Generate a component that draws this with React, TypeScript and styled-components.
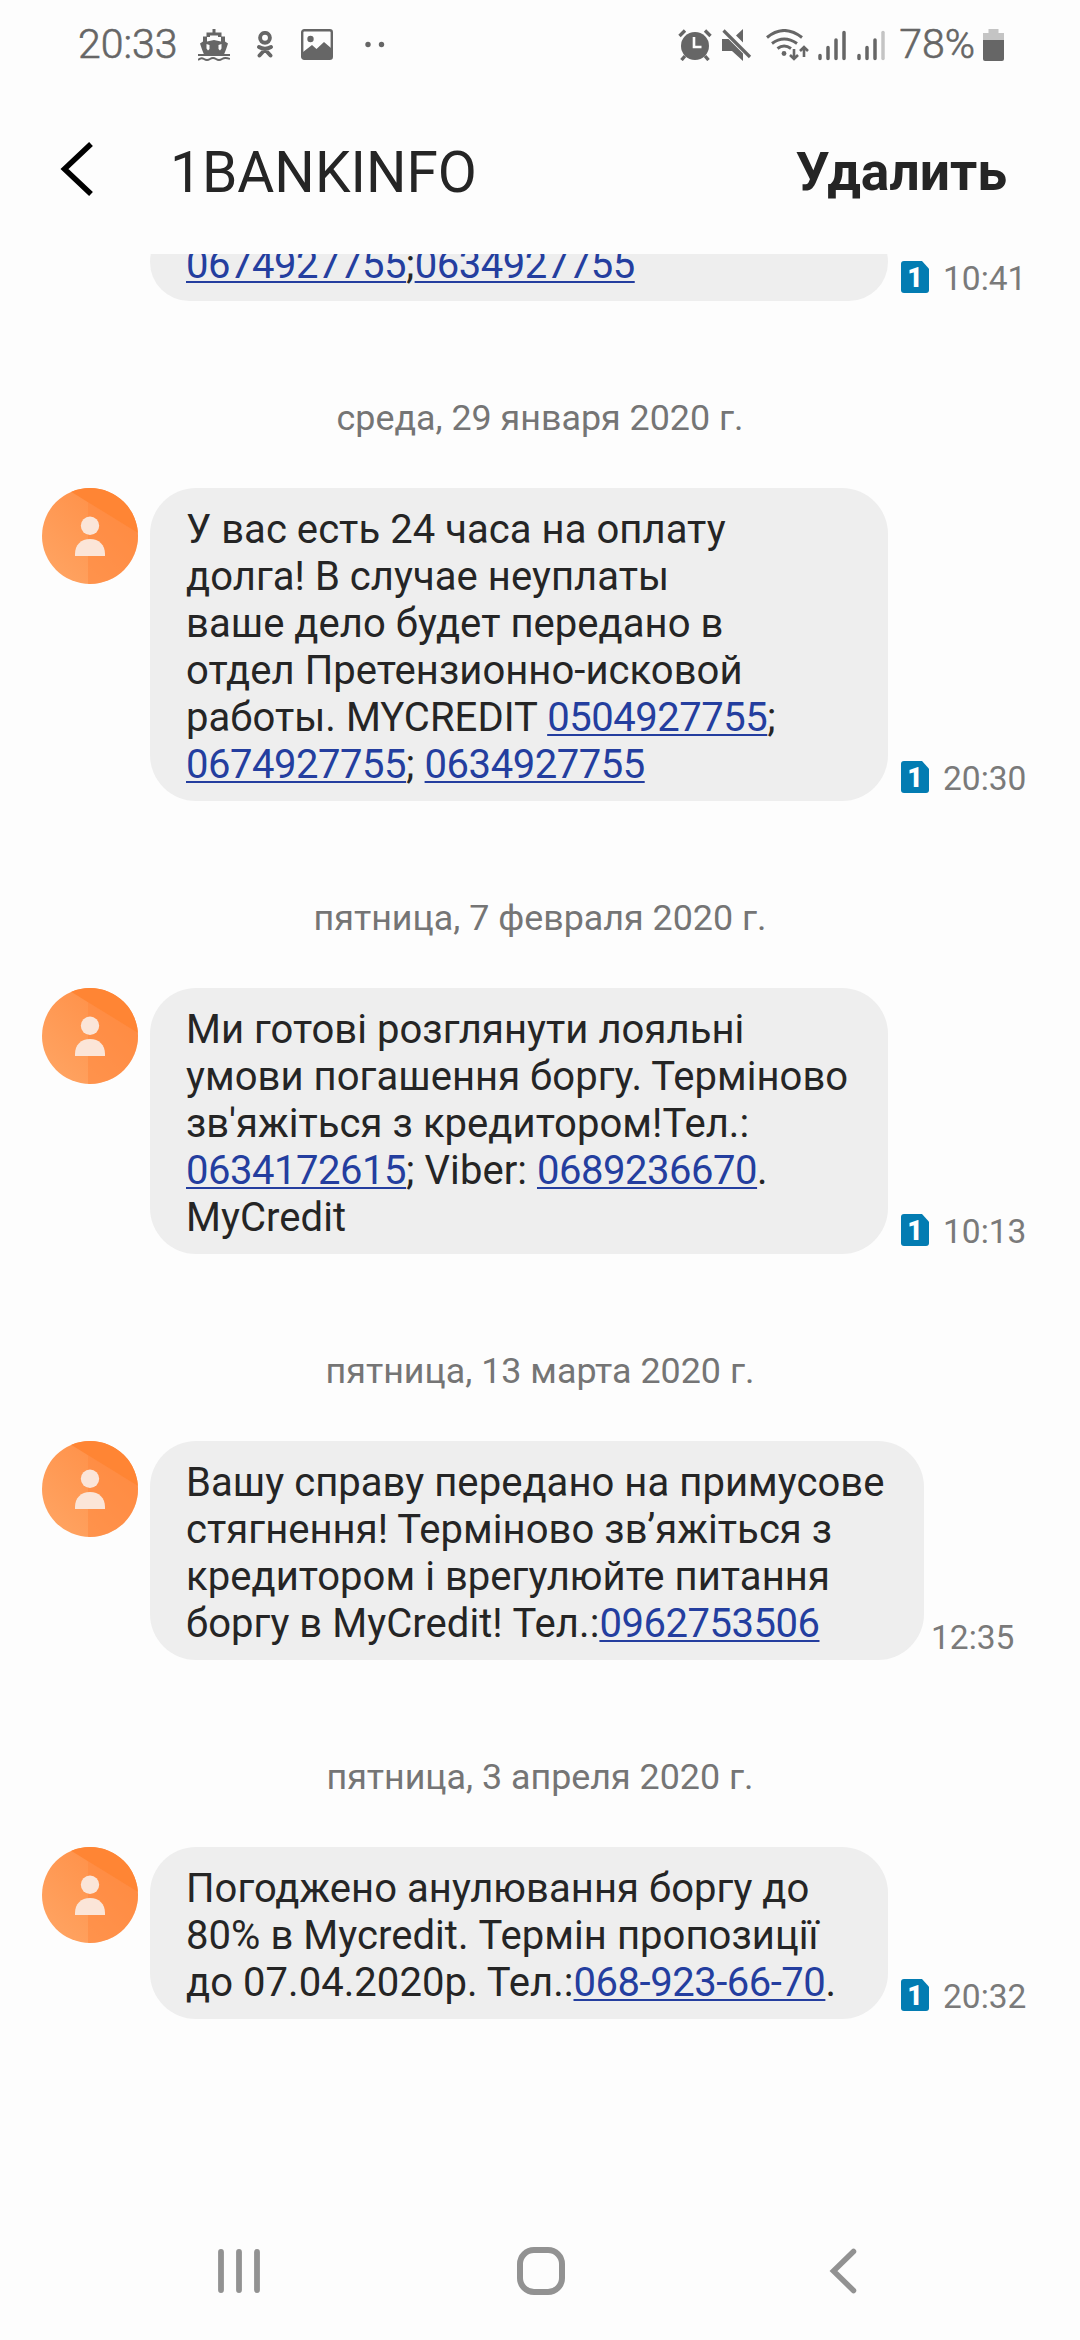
import React from 'react';
import styled, { createGlobalStyle } from 'styled-components';

const Global = createGlobalStyle`
  * { box-sizing: border-box; }
  html, body { margin: 0; background: #fdfdfd; }
  body { font-family: Roboto, "Noto Sans", sans-serif; }
`;

const Screen = styled.div`
  width: 1080px;
  height: 2340px;
  display: flex;
  flex-direction: column;
  background: #fdfdfd;
  color: #252525;
  overflow: hidden;
`;

const StatusBar = styled.header`
  height: 89px;
  display: flex;
  justify-content: space-between;
  padding: 0 76px 0 78px;
  color: #666;
  flex: none;
`;

const StatusGroup = styled.div`
  display: flex;
  align-items: center;
`;

const StatusText = styled.span<{ $gap?: number }>`
  font-size: 41px;
  font-weight: 300;
  -webkit-text-stroke: 0.6px #666;
  line-height: 89px;
  margin-left: ${(p) => p.$gap ?? 0}px;
`;

const Glyph = styled.svg<{ $gap?: number }>`
  display: block;
  flex: none;
  margin-left: ${(p) => p.$gap ?? 0}px;
`;

const AppBar = styled.div`
  height: 165px;
  display: flex;
  align-items: flex-start;
  padding: 0 73px 0 60px;
  flex: none;
`;

const BackButton = styled.button`
  border: 0;
  padding: 53px 0 0;
  background: none;
  width: 110px;
  text-align: left;
`;

const Title = styled.h1`
  margin: 0;
  padding-top: 49px;
  font-size: 56.8px;
  line-height: 70px;
  font-weight: 400;
  flex: 1;
`;

const DeleteButton = styled.button`
  border: 0;
  padding: 48px 0 0;
  background: none;
  color: #252525;
  font-family: inherit;
  font-size: 53.4px;
  line-height: 70px;
  font-weight: 700;
`;

const Thread = styled.main`
  height: 1948px;
  overflow: hidden;
  flex: none;
  display: flex;
  flex-direction: column;
`;

const DateLine = styled.div`
  height: 187px;
  flex: none;
  display: flex;
  align-items: center;
  justify-content: center;
  font-size: 35.85px;
  color: #757575;
  padding-top: 46px;
`;

const MessageRow = styled.div<{ $cut?: boolean }>`
  display: flex;
  align-items: flex-end;
  flex: none;
  padding-left: 42px;
  margin-top: ${(p) => (p.$cut ? -31 : 0)}px;
`;

const AvatarSlot = styled.div`
  width: 108px;
  align-self: flex-start;
  flex: none;
`;

const Bubble = styled.div<{ $width: number }>`
  width: ${(p) => p.$width}px;
  padding: 18px 0 13px 36px;
  border-radius: 46px;
  background: #eee;
  font-size: 40px;
  letter-spacing: 0.05px;
  line-height: 47px;
  white-space: nowrap;
`;

const Line = styled.div`
  height: 47px;
`;

const Phone = styled.a`
  color: #243e9f;
  letter-spacing: -0.47px;
  text-decoration: underline;
  text-decoration-thickness: 2px;
  text-underline-offset: 3px;
  text-decoration-skip-ink: none;
`;

const Stamp = styled.div<{ $gap: number }>`
  display: flex;
  align-items: flex-start;
  gap: 14px;
  margin-left: ${(p) => p.$gap}px;
  height: 44px;
  font-size: 33.5px;
  line-height: 44px;
  color: #7a7a7a;
`;

const SimBadge = styled.span`
  width: 28px;
  height: 32px;
  margin-top: 4px;
  background: #037cb2;
  border-radius: 3px;
  clip-path: polygon(0 0, 75% 0, 100% 24%, 100% 100%, 0 100%);
  color: #fff;
  font-size: 27px;
  font-weight: 900;
  line-height: 34px;
  text-align: center;
`;

const NavBar = styled.nav`
  height: 138px;
  display: flex;
  align-items: center;
  padding-left: 217px;
  flex: none;
`;

const Avatar = ({ id }: { id: string }) => (
  <Glyph width="96" height="96" viewBox="0 0 96 96">
    <defs>
      <clipPath id={id}><circle cx="48" cy="48" r="48" /></clipPath>
      <linearGradient id={id + 'g'} x1="1" y1="0" x2="0" y2="1">
        <stop offset="0" stopColor="#ff8a40" />
        <stop offset="1" stopColor="#ffa665" />
      </linearGradient>
    </defs>
    <g clipPath={`url(#${id})`}>
      <rect width="96" height="96" fill={`url(#${id}g)`} />
      <path d="M46 14 L96 45 V96 H46z" fill="#ff883f" opacity=".55" />
      <path d="M23 0 L96 45 V0z" fill="#ff8534" />
    </g>
    <circle cx="48" cy="37.7" r="9.2" fill="#fbe5d8" />
    <path d="M33 68v-2c0-9 6-15 15-15s15 6 15 15v2z" fill="#fbe5d8" />
  </Glyph>
);

type Part = string | { tel: string };
type Message = { date?: string; lines: Part[][]; time: string; width: number; sim: boolean };

const messages: Message[] = [
  {
    lines: [[{ tel: '0674927755' }, ';', { tel: '0634927755' }]],
    time: '10:41', width: 738, sim: true,
  },
  {
    date: 'среда, 29 января 2020 г.',
    lines: [
      ['У вас есть 24 часа на оплату'],
      ['долга! В случае неуплаты'],
      ['ваше дело будет передано в'],
      ['отдел Претензионно-исковой'],
      ['работы. MYCREDIT ', { tel: '0504927755' }, ';'],
      [{ tel: '0674927755' }, '; ', { tel: '0634927755' }],
    ],
    time: '20:30', width: 738, sim: true,
  },
  {
    date: 'пятница, 7 февраля 2020 г.',
    lines: [
      ['Ми готові розглянути лояльні'],
      ['умови погашення боргу. Терміново'],
      ["зв'яжіться з кредитором!Тел.:"],
      [{ tel: '0634172615' }, '; Viber: ', { tel: '0689236670' }, '.'],
      ['MyCredit'],
    ],
    time: '10:13', width: 738, sim: true,
  },
  {
    date: 'пятница, 13 марта 2020 г.',
    lines: [
      ['Вашу справу передано на примусове'],
      ['стягнення! Терміново зв’яжіться з'],
      ['кредитором і врегулюйте питання'],
      ['боргу в MyCredit! Тел.:', { tel: '0962753506' }],
    ],
    time: '12:35', width: 774, sim: false,
  },
  {
    date: 'пятница, 3 апреля 2020 г.',
    lines: [
      ['Погоджено анулювання боргу до'],
      ['80% в Mycredit. Термін пропозиції'],
      ['до 07.04.2020р. Тел.:', { tel: '068-923-66-70' }, '.'],
    ],
    time: '20:32', width: 738, sim: true,
  },
];

export default function App() {
  return (
    <>
      <Global />
      <Screen>
        <StatusBar>
          <StatusGroup>
            <StatusText>20:33</StatusText>
            <Glyph $gap={20} width="32" height="32" viewBox="0 0 32 32" fill="#666">
              <path d="M14.500 0h3v3.500h6v4H27v5l3 2-2 6-2 5H6l-2-5-2-6 3-2v-5h3.500v-4h6zM9 8v4.500l7-1.500 7 1.500V8h-3V6.500h-8V8z" fillRule="evenodd" />
              <path d="M8.500 15l3 1v4l-1.500 1.500-1.500-2zM23.500 15l-3 1v4l1.500 1.500 1.500-2z" fill="#fdfdfd" />
              <path d="M0 26h32" stroke="#666" strokeWidth="2" />
              <path d="M0 31q3-3 6-1t6 0 6 0 6 0 8 0" fill="none" stroke="#666" strokeWidth="1.800" />
            </Glyph>
            <Glyph $gap={27} width="16" height="27" viewBox="0 0 16 27" fill="none" stroke="#666" strokeWidth="3.900" strokeLinecap="round">
              <circle cx="8" cy="6.800" r="4.900" />
              <path d="M2 16q6 3.500 12 0M8 18.500l-5.500 6M8 18.500l5.500 6" />
            </Glyph>
            <Glyph $gap={28} width="32" height="31" viewBox="0 0 32 31">
              <rect x="1.200" y="1.200" width="29.600" height="28.600" rx="2" fill="none" stroke="#666" strokeWidth="2.400" />
              <circle cx="9.500" cy="10" r="3.200" fill="#666" />
              <path d="M2 23l9-7 4.500 4 7.500-7 7 6v10H2z" fill="#666" />
            </Glyph>
            <Glyph $gap={32} width="20" height="8" viewBox="0 0 20 8" fill="#666">
              <circle cx="3" cy="3.500" r="2.700" /><circle cx="16.500" cy="3.500" r="2.700" />
            </Glyph>
          </StatusGroup>
          <StatusGroup>
            <Glyph width="34" height="32" viewBox="0 0 34 32">
              <circle cx="17" cy="17" r="14" fill="#666" />
              <path d="M1.500 7l5.500-5.500M32.500 7L27 1.500M7 27l-3.500 4M27 27l3.500 4" stroke="#666" strokeWidth="3.400" />
              <path d="M16 8v10h7.500" fill="none" stroke="#fdfdfd" strokeWidth="2.600" />
            </Glyph>
            <Glyph $gap={10} width="30" height="32" viewBox="0 0 30 32" fill="#666">
              <path d="M0 10h6.500L21 24.500V32L10 22H0zM14 6.500l7-6.500v13.500z" />
              <path d="M1.500 1.500L28 28" stroke="#666" strokeWidth="3.200" />
            </Glyph>
            <Glyph $gap={14} width="43" height="32" viewBox="0 0 43 32" fill="none" stroke="#666" strokeWidth="3">
              <path d="M1 8.500q17-14 35 0M6 14.500q12-9 25 0M11.500 19.500q6.500-5 13.500 0" />
              <circle cx="18" cy="24.500" r="2.400" fill="#666" stroke="none" />
              <path d="M28 20v10M24 26l4 4 4-4M38 28V18M34 22l4-4 4 4" strokeWidth="2.600" />
            </Glyph>
            <Glyph $gap={9} width="28" height="32" viewBox="0 0 28 32" stroke="#666" strokeWidth="3.500" strokeLinecap="round">
              <path d="M2 26.500v3M10 18.500v11M18 11v18.500M26 3.500v26" />
            </Glyph>
            <Glyph $gap={11} width="28" height="32" viewBox="0 0 28 32" stroke="#666" strokeWidth="3.500" strokeLinecap="round">
              <path d="M2 26.500v3M10 18.500v11M18 11v18.500" />
              <path d="M26 3.500v26" stroke="#c4c4c4" />
            </Glyph>
            <StatusText $gap={14}>78%</StatusText>
            <Glyph $gap={8} width="21" height="32" viewBox="0 0 21 32">
              <path d="M5.500 0h10v4H21v8H0V4h5.500z" fill="#c4c4c4" />
              <path d="M0 11h21v19q0 2-2 2H2q-2 0-2-2z" fill="#666" />
            </Glyph>
          </StatusGroup>
        </StatusBar>

        <AppBar>
          <BackButton aria-label="Назад">
            <Glyph width="34" height="54" viewBox="0 0 34 54">
              <path d="M31 2L4.500 27L31 52" fill="none" stroke="#000" strokeWidth="5.500" />
            </Glyph>
          </BackButton>
          <Title>1BANKINFO</Title>
          <DeleteButton>Удалить</DeleteButton>
        </AppBar>

        <Thread>
          {messages.map((m, i) => (
            <React.Fragment key={i}>
              {m.date && <DateLine>{m.date}</DateLine>}
              <MessageRow $cut={i === 0}>
                <AvatarSlot>{i > 0 && <Avatar id={`avatar${i}`} />}</AvatarSlot>
                <Bubble $width={m.width}>
                  {m.lines.map((parts, j) => (
                    <Line key={j}>
                      {parts.map((p, k) =>
                        typeof p === 'string' ? p : <Phone key={k}>{p.tel}</Phone>,
                      )}
                    </Line>
                  ))}
                </Bubble>
                <Stamp $gap={m.sim ? 13 : 7}>
                  {m.sim && <SimBadge>1</SimBadge>}
                  {m.time}
                </Stamp>
              </MessageRow>
            </React.Fragment>
          ))}
        </Thread>

        <NavBar>
          <Glyph width="44" height="46" viewBox="0 0 44 46" stroke="#929292" strokeWidth="5.800" strokeLinecap="round">
            <path d="M4 4v38M22 4v38M40 4v38" />
          </Glyph>
          <Glyph $gap={256} width="48" height="48" viewBox="0 0 48 48">
            <rect x="3" y="3" width="42" height="42" rx="14" fill="none" stroke="#929292" strokeWidth="6" />
          </Glyph>
          <Glyph $gap={264} width="28" height="46" viewBox="0 0 28 46">
            <path d="M24.500 3.500L4.500 23l20 19.500" fill="none" stroke="#929292" strokeWidth="5.500" strokeLinecap="round" />
          </Glyph>
        </NavBar>
      </Screen>
    </>
  );
}
